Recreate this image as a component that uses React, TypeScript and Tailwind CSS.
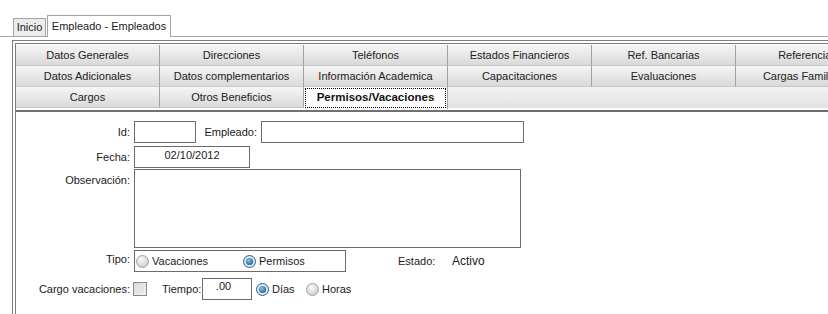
import React from "react";

const rows: string[][] = [
  ["Datos Generales", "Direcciones", "Teléfonos", "Estados Financieros", "Ref. Bancarias", "Referencias"],
  ["Datos Adicionales", "Datos complementarios", "Información Academica", "Capacitaciones", "Evaluaciones", "Cargas Familiares"],
];

function TabCell({ label }: { label: string }) {
  return (
    <div className="h-[21px] w-[144px] shrink-0 flex items-center justify-center pt-px border-r border-b border-r-[#a2a2a2] border-b-[#c9c9c9] bg-gradient-to-b from-[#f6f6f6] to-[#d9d9d9] text-[#222] whitespace-nowrap overflow-hidden">
      {label}
    </div>
  );
}

function Radio({ checked }: { checked?: boolean }) {
  return (
    <svg width="13" height="13" viewBox="0 0 13 13" className="shrink-0">
      <defs>
        <radialGradient id="rg-off" cx="40%" cy="35%" r="70%">
          <stop offset="0%" stopColor="#fbfbfb" />
          <stop offset="100%" stopColor="#c9c9c9" />
        </radialGradient>
        <radialGradient id="rg-on" cx="40%" cy="35%" r="70%">
          <stop offset="0%" stopColor="#8fc4ea" />
          <stop offset="100%" stopColor="#1f5f94" />
        </radialGradient>
      </defs>
      {checked ? (
        <>
          <circle cx="6.5" cy="6.5" r="6" fill="#dbe7f1" stroke="#2f5f86" />
          <circle cx="6.5" cy="6.5" r="3.6" fill="url(#rg-on)" />
        </>
      ) : (
        <circle cx="6.5" cy="6.5" r="6" fill="url(#rg-off)" stroke="#a3a3a3" />
      )}
    </svg>
  );
}

export default function App() {
  return (
    <div className="w-[828px] h-[314px] overflow-hidden bg-white font-['Liberation_Sans',Arial,sans-serif] text-[11px] text-[#1a1a1a]">
      {/* top level tabs */}
      <div className="pt-[15px] pl-[12px] flex items-end h-[37px] border-b border-[#a4a4a4]">
        <div className="ml-[1px] h-[18px] w-[33px] flex items-center justify-center border border-b-0 border-[#a4a4a4] bg-[#ececec]">
          Inicio
        </div>
        <div className="ml-px h-[22px] w-[124px] -mb-px flex items-center justify-center border border-b-0 border-[#a4a4a4] bg-white">
          Empleado - Empleados
        </div>
      </div>

      <div className="mt-[3px] ml-[12px] w-[840px] border-l-4 border-t-4 border-double border-[#7c7c7c]">
        <div className="mt-px">
          {rows.map((r, i) => (
            <div key={i} className="flex">
              {r.map((t) => (
                <TabCell key={t} label={t} />
              ))}
            </div>
          ))}
          <div className="flex">
            <TabCell label="Cargos" />
            <TabCell label="Otros Beneficios" />
            <div className="h-[22px] w-[144px] shrink-0 p-px bg-white border-r border-[#a2a2a2]">
              <div className="h-full border border-dotted border-black flex items-center justify-center text-[11.5px] font-bold text-[#111]">
                Permisos/Vacaciones
              </div>
            </div>
            <div className="h-[21px] flex-1 bg-gradient-to-b from-[#f3f3f3] to-[#e2e2e2]" />
          </div>
        </div>

        {/* content */}
        <div className="mt-px border-t-2 border-[#707070] pt-[9px] pb-4 flex flex-col">
          <div className="flex items-center h-[22px]">
            <span className="w-[114px] text-right">Id:</span>
            <div className="ml-[4px] w-[62px] h-[22px] border border-[#6c6c6c]" />
            <span className="ml-[6px] w-[55px] text-right">Empleado:</span>
            <div className="ml-[4px] w-[263px] h-[22px] border border-[#6c6c6c]" />
          </div>

          <div className="mt-[3px] flex items-center h-[22px]">
            <span className="w-[114px] text-right">Fecha:</span>
            <div className="ml-[4px] w-[116px] h-[22px] border border-[#6c6c6c] flex items-center justify-center pb-[3px]">
              02/10/2012
            </div>
          </div>

          <div className="mt-px flex items-start">
            <span className="w-[114px] text-right pt-[3px]">Observación:</span>
            <div className="ml-[4px] w-[387px] h-[79px] border border-[#6c6c6c]" />
          </div>

          <div className="mt-[2px] flex items-center h-[22px]">
            <span className="w-[114px] text-right pb-[3px]">Tipo:</span>
            <div className="ml-[4px] w-[212px] h-[22px] border border-[#6c6c6c] flex items-center pl-px">
              <div className="w-[107px] flex items-center gap-[3px]">
                <Radio />
                <span>Vacaciones</span>
              </div>
              <div className="flex items-center gap-[3px]">
                <Radio checked />
                <span>Permisos</span>
              </div>
            </div>
            <span className="ml-[52px] w-[54px]">Estado:</span>
            <span className="text-[12px]">Activo</span>
          </div>

          <div className="mt-[6px] flex items-center h-[22px]">
            <span className="w-[114px] text-right">Cargo vacaciones:</span>
            <div className="ml-[3px] w-[14px] h-[14px] border border-[#8a8a8a] bg-gradient-to-br from-[#d8d8d8] to-[#f4f4f4] p-[2px]">
              <div className="w-full h-full bg-[#e4e4e4]" />
            </div>
            <span className="ml-[15px] w-[40px]">Tiempo:</span>
            <div className="w-[50px] h-[22px] border border-[#6c6c6c] flex justify-center pt-[2px] pr-[7px] leading-[11px]">
              .00
            </div>
            <div className="ml-[4px] w-[50px] flex items-center gap-[3px]">
              <Radio checked />
              <span>Días</span>
            </div>
            <div className="flex items-center gap-[3px]">
              <Radio />
              <span>Horas</span>
            </div>
          </div>
        </div>
      </div>
    </div>
  );
}
